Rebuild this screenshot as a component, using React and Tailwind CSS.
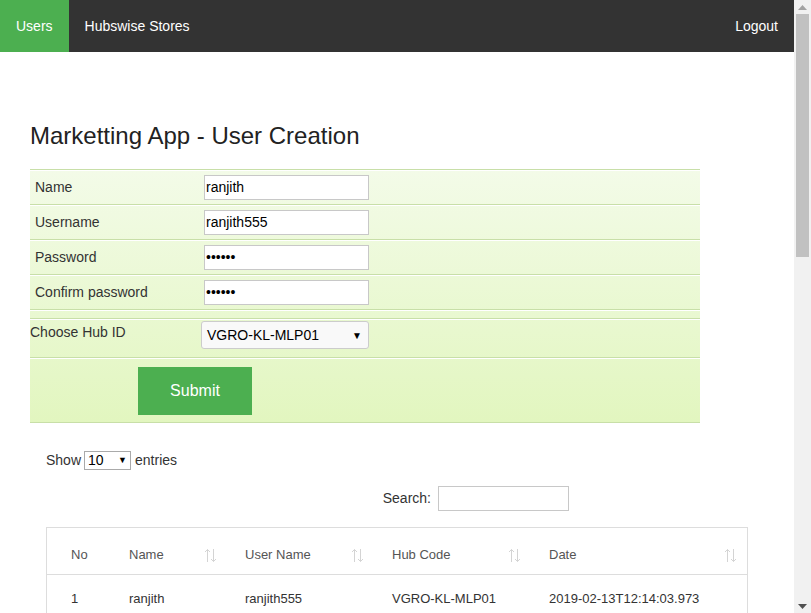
import React from "react";

const font = { fontFamily: '"Liberation Sans", Arial, sans-serif' };

const fields = [
  { label: "Name", value: "ranjith", type: "text" },
  { label: "Username", value: "ranjith555", type: "text" },
  { label: "Password", value: "ranjit", type: "password" },
  { label: "Confirm password", value: "ranjit", type: "password" },
];

const cols = [
  { title: "No", w: "w-[58px]", sort: false, pr: "" },
  { title: "Name", w: "w-[116px]", sort: true, pr: "pr-[28px]" },
  { title: "User Name", w: "w-[147px]", sort: true, pr: "pr-[28px]" },
  { title: "Hub Code", w: "w-[157px]", sort: true, pr: "pr-[28px]" },
  { title: "Date", w: "flex-1", sort: true, pr: "pr-[10px]" },
];

function SortIcon() {
  return (
    <svg width="13" height="15" viewBox="0 0 13 15" fill="none" stroke="#d4d4d4" strokeWidth="1">
      <path d="M3.5 14V1.5M1 4l2.5-2.5L6 4" />
      <path d="M9.5 1v12.5M7 11l2.5 2.5L12 11" />
    </svg>
  );
}

function Scrollbar() {
  return (
    <div className="w-[17px] h-[613px] bg-[#f1f1f1] flex flex-col items-center shrink-0">
      <div className="h-[14px] flex items-center justify-center">
        <svg width="9" height="5" viewBox="0 0 9 5"><path d="M4.5 0L9 5H0z" fill="#a3a3a3" /></svg>
      </div>
      <div className="w-[13px] h-[243px] bg-[#c1c1c1]" />
      <div className="mt-auto h-[14px] flex items-center justify-center">
        <svg width="9" height="5" viewBox="0 0 9 5"><path d="M0 0h9L4.5 5z" fill="#505050" /></svg>
      </div>
    </div>
  );
}

export default function App() {
  return (
    <div className="flex h-[613px] overflow-hidden bg-white text-[#333]" style={font}>
      <div className="flex-1 min-w-0 overflow-hidden">
        <nav className="h-[52px] bg-[#333] flex items-stretch text-white text-[14px]">
          <a className="bg-[#4caf50] px-4 flex items-center">Users</a>
          <a className="px-4 flex items-center">Hubswise Stores</a>
          <a className="ml-auto px-4 flex items-center">Logout</a>
        </nav>

        <div className="px-[30px] pt-[70px]">
          <h2 className="text-[24px] text-[#222] leading-[28px] mb-[19px]">Marketting App - User Creation</h2>

          <div className="w-[670px] border-t border-[#c8dfa8] bg-linear-to-b from-[#f3fbe8] to-[#e2f6bf]">
            {fields.map((f) => (
              <div key={f.label} className="h-[35px] flex items-center border-b border-[#c8dfa8] shadow-[inset_0_1px_0_#ffffff] text-[14px]">
                <div className="w-[174px] pl-[5px]">{f.label}</div>
                <input
                  readOnly
                  type={f.type}
                  value={f.value}
                  className="w-[165px] h-[25px] border border-[#c8c8c8] bg-white px-[1px] text-[14px] text-black outline-none"
                />
              </div>
            ))}
            <div className="h-[9px] border-b border-[#c8dfa8] shadow-[inset_0_1px_0_#ffffff]" />
            <div className="h-[39px] flex items-start border-b border-[#c8dfa8] shadow-[inset_0_1px_0_#ffffff] text-[14px]">
              <div className="w-[171px] pt-[3px]">Choose Hub ID</div>
              <div className="mt-[2px] w-[168px] h-[28px] border border-[#ccc] rounded-[3px] bg-[#f9f9f9] flex items-center justify-between pl-[5px] pr-[6px] text-black">
                <span>VGRO-KL-MLP01</span>
                <span className="text-[10px]">▼</span>
              </div>
            </div>
            <div className="h-[65px] border-b border-[#c8dfa8] shadow-[inset_0_1px_0_#ffffff] pl-[108px] pt-[9px]">
              <button className="w-[114px] h-[48px] bg-[#4caf50] text-white text-[16px]">Submit</button>
            </div>
          </div>

          <div className="px-[16px] pt-[27px] w-[734px] text-[14px]">
            <div className="flex items-center gap-[2px]">
              <span>Show</span>
              <span className="ml-[1px] w-[47px] h-[19px] border border-[#aaa] flex items-center justify-between px-[3px] text-black">
                <span>10</span>
                <span className="text-[9px]">▼</span>
              </span>
              <span className="ml-[2px]">entries</span>
            </div>
            <div className="flex items-center justify-end mt-[15px] pr-[179px]">
              <span>Search:</span>
              <span className="ml-[7px] w-[131px] h-[25px] border border-[#c8c8c8] bg-white" />
            </div>

            <div className="mt-[16px] border border-[#ddd] w-[702px]">
              <div className="h-[47px] flex items-center pt-[8px] border-b border-[#ddd] text-[13px] text-[#555] pl-[24px]">
                {cols.map((c) => (
                  <div key={c.title} className={"flex items-center justify-between " + c.w + " " + c.pr}>
                    <span>{c.title}</span>
                    {c.sort && <SortIcon />}
                  </div>
                ))}
              </div>
              <div className="h-[47px] flex items-center text-[13px] text-[#333] pl-[24px]">
                <div className="w-[58px]">1</div>
                <div className="w-[116px]">ranjith</div>
                <div className="w-[147px]">ranjith555</div>
                <div className="w-[157px]">VGRO-KL-MLP01</div>
                <div>2019-02-13T12:14:03.973</div>
              </div>
            </div>
          </div>
        </div>
      </div>
      <Scrollbar />
    </div>
  );
}
